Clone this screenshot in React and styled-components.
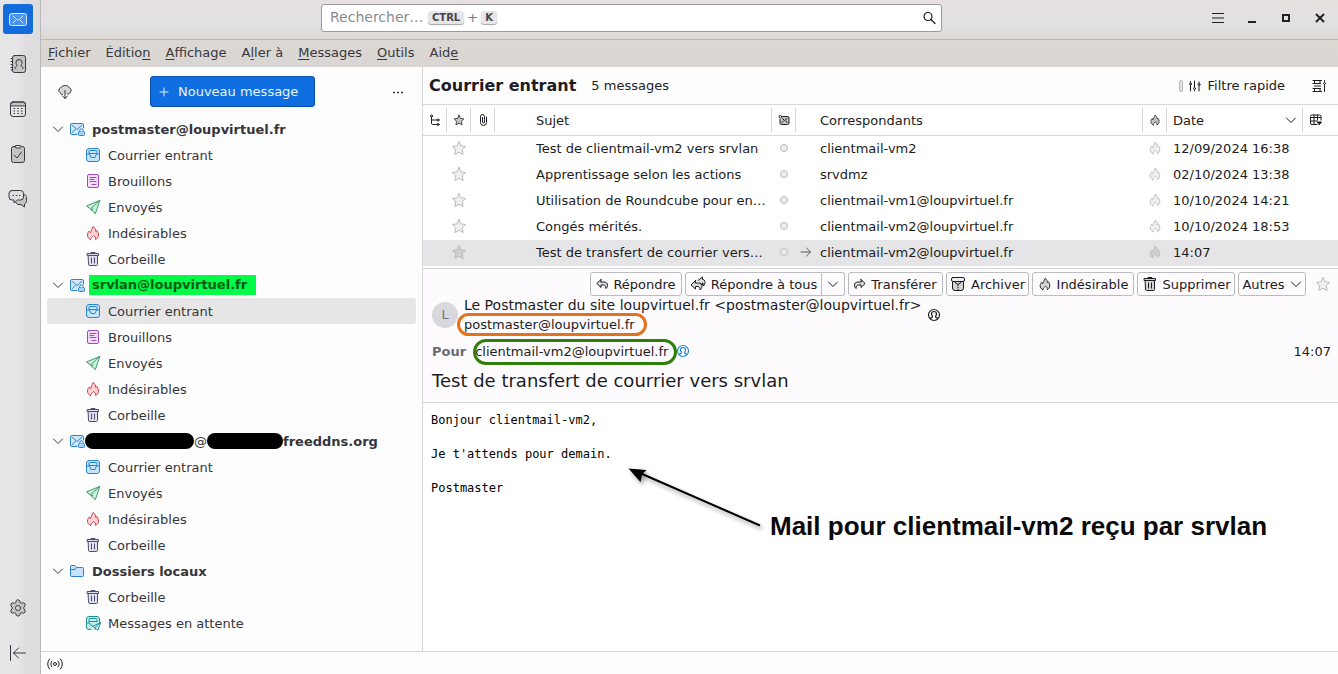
import React from "react";
import styled, { createGlobalStyle, css } from "styled-components";

const Global = createGlobalStyle`
  *, *::before, *::after { box-sizing: border-box; }
  body {
    margin: 0;
    font-family: "DejaVu Sans", "Liberation Sans", sans-serif;
    font-size: 13px;
    line-height: 19px;
    color: #1c1c22;
    background: #fefdfe;
  }
  button, input { font: inherit; color: inherit; margin: 0; }
  button { padding: 0; border: 0; background: none; }
  svg { display: block; flex: none; }
`;

/* ---------- icons ---------- */

const Svg = ({ size = 16, box = 16, children, ...rest }) => (
  <svg
    width={size}
    height={size}
    viewBox={`0 0 ${box} ${box}`}
    fill="none"
    stroke="currentColor"
    strokeWidth="1"
    strokeLinecap="round"
    strokeLinejoin="round"
    aria-hidden="true"
    {...rest}
  >
    {children}
  </svg>
);

const MailSpace = () => (
  <Svg size={18} box={18}>
    <rect x="0.5" y="3.5" width="17" height="12" rx="2" fill="#4a93ee" />
    <path d="M4 6l3.500 3.300c.9.800 2.100.800 3 0L14 6M4 13l3-3M14 13l-3-3" />
  </Svg>
);
const BookSpace = () => (
  <Svg size={18} box={18}>
    <rect x="3.500" y="0.500" width="13" height="17" rx="2" fill="#c4c4c6" />
    <path d="M2 3.500h1.500M2 6.500h1.500M2 9.500h1.500M2 12.500h1.500M2 15h1.500" />
    <path d="M6 13.500c0-2.500 2-2 2-3.200 0-.8-1-1-1-2.800a3 3 0 0 1 6 0c0 1.800-1 2-1 2.800 0 1.200 2 .700 2 3.200" />
  </Svg>
);
const CalendarSpace = () => (
  <Svg size={18} box={18}>
    <path d="M1.500 5.500v-1a2.500 2.500 0 0 1 2.500-2.500h10a2.500 2.500 0 0 1 2.500 2.500v1z" fill="#c4c4c6" />
    <rect x="1.500" y="2" width="15" height="14.500" rx="2.500" />
    <path d="M5 8.500h.6M8.700 8.500h.6M12.400 8.500h.6M5 11h.6M8.700 11h.6M12.400 11h.6M5 13.500h.6M8.700 13.500h.6M12.400 13.500h.6" strokeWidth="1.200" />
  </Svg>
);
const TaskSpace = () => (
  <Svg size={18} box={18}>
    <rect x="2.500" y="1.500" width="13" height="16" rx="2" fill="#c4c4c6" />
    <path d="M6 1.500c0-1 .5-1 1-1h4c.5 0 1 0 1 1s-.5 1.500-1 1.500H7c-.5 0-1-.5-1-1.500z" fill="#dcdcde" />
    <path d="M5.500 10.500l2.500 2.500 4.500-6" />
  </Svg>
);
const ChatSpace = () => (
  <Svg size={20} box={20}>
    <path d="M16.500 5.500c1.500.5 2 1.500 2 3v3c0 2-.8 3-2 3.500v3L13 15.500H11c-1.500 0-2.500-.7-3-2" fill="#c4c4c6" />
    <path d="M4 1.500h8.500a3 3 0 0 1 3 3v3.500a3 3 0 0 1-3 3H9.500L6 14v-3H4a3 3 0 0 1-3-3V4.500a3 3 0 0 1 3-3z" fill="#dcdcde" />
    <path d="M5 6.500h.6M8.200 6.500h.6M11.400 6.500h.6" />
  </Svg>
);
const Gear = () => (
  <Svg size={18} box={18}>
    <path d="M9 .8l1.800 1 .4 1.700 1.400.8 1.700-.6 1.800 1.100v2l-1.200 1.300v1.800l1.200 1.300v2l-1.800 1.100-1.700-.6-1.400.8-.4 1.700-1.800 1-1.800-1-.4-1.700-1.400-.8-1.700.6-1.800-1.100v-2L3.100 9.900V8.100L1.900 6.800v-2l1.800-1.100 1.700.6 1.400-.8.4-1.700z" fill="#c4c4c6" />
    <circle cx="9" cy="9" r="2.500" fill="#dcdcde" />
  </Svg>
);
const Collapse = () => (
  <Svg size={18} box={18}><path d="M1.500 1.500v15M16.500 9H4.500M9.500 4L4.500 9l5 5" /></Svg>
);
const Cloud = () => (
  <Svg>
    <path d="M5.500 10.500H4.500L3 8.500A2.500 2.500 0 0 1 3.500 4C4.500 2 6.500 1.500 8.500 1.500s3 .8 3.700 2.200a2.700 2.700 0 0 1 1.300 4.300c-.5 1.500-1.500 2-3 2" fill="#d8d8da" />
    <path d="M8 6.500v8M5.500 12L8 14.500l2.500-2.500" />
  </Svg>
);
const Plus = () => <Svg size={12} box={12}><path d="M6 2v8M2 6h8" /></Svg>;
const Dots = () => (
  <Svg size={12} box={12}><path d="M1 6.500h2M5 6.500h2M9 6.500h2" strokeWidth="1.600" strokeLinecap="butt" /></Svg>
);
const Chevron = () => <Svg size={12} box={12}><path d="M1.500 4L6 8.500 10.500 4" /></Svg>;
const Account = () => (
  <Svg>
    <path d="M8 13.500H3A1.500 1.500 0 0 1 1.500 12V4A1.500 1.500 0 0 1 3 2.500h10A1.500 1.500 0 0 1 14.500 4v3" fill="#cfe8fb" />
    <path d="M3.500 4.500L8 8.500l4.500-4M3.500 11.500l2.500-3" />
    <rect x="9.500" y="10.500" width="6" height="4" rx="1" fill="#a9d4f8" />
    <path d="M10.800 10.500V9.500a1.700 1.700 0 0 1 3.400 0v1" fill="#e8f5fe" />
  </Svg>
);
const Inbox = () => (
  <Svg>
    <rect x="1.500" y="1.500" width="13" height="13" rx="2.500" fill="#c6e6fb" />
    <path d="M4 6.500V4.500a1 1 0 0 1 1-1h6a1 1 0 0 1 1 1v2M2 7h2.500L6 10.500h4L11.500 7H14M4.500 6.500h7" />
  </Svg>
);
const Drafts = () => (
  <Svg>
    <rect x="2.500" y="1.500" width="11" height="13" rx="1.500" fill="#f2dbfb" />
    <path d="M5 4.500h6M5 6.500h4M5 8.500h6M7 11.500h4" />
  </Svg>
);
const Sent = () => (
  <Svg>
    <path d="M14.500 1.500L1.500 7l3.500 2.500 5 5z" fill="#c9f3d8" />
    <path d="M14.500 1.500L6 9.500v1.500l2-1" />
  </Svg>
);
const flame =
  "M5.500 14.500C3.500 13.500 2.500 12 2.500 10c0-2 1-3 1.500-4 .8 0 1.200.8 1.200 1.800C6.500 6.500 6.800 3.500 8 1.500c2 1 2.700 3 2.700 5l1.300-1c1 1.500 1.500 3 1.500 4.500 0 2-1 3.500-3 4.500.5-2-.5-3.200-2-4-.2 1.200-1.800 1.200-2.200 2.200-.3.700-.8.800-.8 1.800z";
const Flame = ({ size = 16, fill = "#fbd3d6" }) => <Svg size={size}><path d={flame} fill={fill} /></Svg>;
const Trash = ({ fill = "#dfdfef" }) => (
  <Svg>
    <path d="M3.500 4.500h9v9a1 1 0 0 1-1 1h-7a1 1 0 0 1-1-1z" fill={fill} />
    <path d="M2.500 2.500h11v2h-11zM6 2.500V1.500h4v1" fill={fill} />
    <path d="M6.500 7v5M9.500 7v5" />
  </Svg>
);
const Folder = () => (
  <Svg>
    <path d="M1.500 12.500v-9a1 1 0 0 1 1-1h3.500l1.500 2h6a1 1 0 0 1 1 1v7a1 1 0 0 1-1 1h-11a1 1 0 0 1-1-1z" fill="#c6e3fb" />
    <path d="M1.500 6.500H6l1.500-2" />
  </Svg>
);
const Outbox = () => (
  <Svg>
    <path d="M6 14.500H4A2.500 2.500 0 0 1 1.500 12V4A2.500 2.500 0 0 1 4 1.500h8A2.500 2.500 0 0 1 14.500 4v3" fill="#c3f0ee" />
    <path d="M4 7V4.500a1 1 0 0 1 1-1h6a1 1 0 0 1 1 1V7M4.500 6.500h7M2 8h2.500L6 10.500h1" />
    <path d="M15.500 7.500l-8 4 2 1 3 2.500z" fill="#d6f6f1" />
    <path d="M15.500 7.500L10 12.500v2" />
  </Svg>
);
const Broadcast = () => (
  <Svg>
    <circle cx="8" cy="8" r="1.500" />
    <path d="M5 5a4.200 4.200 0 0 0 0 6M11 5a4.200 4.200 0 0 1 0 6M2.500 3a7.500 7.500 0 0 0 0 10M13.500 3a7.500 7.500 0 0 1 0 10" />
  </Svg>
);
const Search = () => (
  <Svg strokeWidth="1.200"><circle cx="7" cy="6.500" r="4" /><path d="M10 9.500l4 4" /></Svg>
);
const Burger = () => <Svg strokeLinecap="butt"><path d="M2 3.500h12M2 8h12M2 12.500h12" /></Svg>;
const Minimize = () => <Svg strokeLinecap="butt" strokeWidth="2"><path d="M4 12h8" /></Svg>;
const Maximize = () => <Svg strokeWidth="2" strokeLinejoin="miter"><rect x="5" y="5" width="6" height="6" /></Svg>;
const Close = () => <Svg strokeWidth="2" strokeLinecap="butt"><path d="M4 4l8 8M12 4l-8 8" /></Svg>;
const Sliders = () => (
  <Svg size={12} box={12}>
    <path d="M1.500 5v6M1.500 1.500v1M5.500 1v6M5.500 10.500v.5M10 6v5M10 2v1.500" />
    <circle cx="1.500" cy="4" r="1" /><circle cx="5.500" cy="8.500" r="1" /><circle cx="10" cy="4.500" r="1" />
  </Svg>
);
const Display = () => (
  <Svg size={14} box={14}>
    <path d="M1 1.500h8.500M1 4.500h7.500M1 9.500h7.500M1 12.500h8.500M2.500 1.500v3M2.500 9.500v3M8 1.500v3M8 9.500v3M2.500 7h6M12.500 6.500v6M12.500 1.500v1" />
    <circle cx="12.500" cy="4.500" r="1" />
  </Svg>
);
const Thread = () => (
  <Svg size={12} box={12}>
    <circle cx="2.500" cy="2" r="1" /><circle cx="9" cy="6" r="1" /><circle cx="9" cy="10.500" r="1" />
    <path d="M2.500 3v6c0 1 .5 1.500 1.500 1.500h4M2.500 6H8" />
  </Svg>
);
const Star = ({ size = 16, fill = "#efeff0" }) => (
  <Svg size={size}>
    <path d="M8 1.500l2 4.300 4.500.7-3.200 3.300.8 4.700L8 12.300l-4.100 2.200.8-4.700L1.500 6.500 6 5.800z" fill={fill} />
  </Svg>
);
const Clip = () => (
  <Svg size={12} box={12}>
    <path d="M9.500 3v5.500a3 3 0 0 1-6 0v-6a2 2 0 0 1 4 0V8a1 1 0 0 1-2 0V3.500" />
  </Svg>
);
const ReadMark = () => (
  <Svg size={12} box={12}>
    <path d="M4.500 2.500h5A1.500 1.500 0 0 1 11 4v5a1.500 1.500 0 0 1-1.500 1.500h-6A1.500 1.500 0 0 1 2 9V5.500" fill="#c4c4c6" />
    <circle cx="2.300" cy="2.700" r="1.300" /><path d="M4.500 4.500L6.500 6.500 9 4.500M4 8.500L5.500 7M9 8.500L8 7" />
  </Svg>
);
const Picker = () => (
  <Svg size={12} box={12}>
    <path d="M7 10.500H2A1.500 1.500 0 0 1 .5 9V2.500A1.500 1.500 0 0 1 2 1h7.500A1.500 1.500 0 0 1 11 2.500V6M.5 3.500H11M4 1v9.500M7.500 1v5M.5 7H7" />
    <path d="M7.500 8h4L9.500 10.500z" fill="currentColor" />
  </Svg>
);
const Forwarded = () => <Svg size={12} box={12} color="#5b5b62"><path d="M1 6h9.500M6.500 2l4 4-4 4" /></Svg>;
const Reply = () => (
  <Svg size={12} box={12}>
    <path d="M5 1.500L.8 5.500 5 9.500V7h2.500c1.500 0 2.500 1 2.500 3.500 1-1 1.500-2 1.500-3C11.500 5 10 4 8 4H5z" fill="#dcdcde" />
  </Svg>
);
const Forward = () => (
  <Svg size={12} box={12}>
    <path d="M7 1.500l4.200 4L7 9.500V7H4.500C3 7 2 8 2 10.500c-1-1-1.500-2-1.500-3C.5 5 2 4 4 4h3z" fill="#dcdcde" />
  </Svg>
);
const ReplyAll = () => (
  <Svg>
    <path d="M8 4.500l4.500-3.500v2.500c1.500-.2 2.500 1 2.500 3 0 1.500-.5 2.500-1.500 3.500 0-2-.3-2.800-1-3v2L10 7" fill="#dcdcde" />
    <path d="M5.500 4.500L1 9l4.500 4v-2.500H8c1.500 0 2 1 2 3.500 1.300-1.200 2-2.500 2-3.500 0-2-1.500-3.500-3.500-3.500h-3z" fill="#dcdcde" />
  </Svg>
);
const Archive = () => (
  <Svg>
    <path d="M2.500 5.500v6.500A2.500 2.500 0 0 0 5 14.500h6a2.500 2.500 0 0 0 2.500-2.500V5.500" fill="#d4d4d6" />
    <rect x="1.500" y="1.500" width="13" height="4" rx="1.500" fill="#f0f0f2" />
    <path d="M5 5.500v1l3 2 3-2v-1M8 8.500v1M8 11v1M8 13.500v.5" />
  </Svg>
);
const Person = () => (
  <Svg size={14} box={14} strokeWidth="1.200">
    <circle cx="7" cy="7" r="5.500" />
    <path d="M3.500 10.500c.3-1 2-.8 2-1.800 0-.7-1-1-1-2.700a2.500 2.500 0 0 1 5 0c0 1.700-1 2-1 2.700 0 1 1.700.8 2 1.800" />
  </Svg>
);

/* ---------- shell ---------- */

const Shell = styled.div`
  display: flex;
  min-height: 100vh;
`;
const Rail = styled.nav`
  display: flex;
  flex-direction: column;
  align-items: center;
  flex: none;
  width: 41px;
  padding: 4px 5px 12px 0;
  color: #38383d;
  border-right: 1px solid #b9b9bc;
  background: linear-gradient(90deg, #e4e5e4, #e8e6e8 40%, #dfdddf 65%, #dcdcdd);
`;
const SpaceButton = styled.button`
  display: grid;
  place-items: center;
  width: 30px;
  height: 30px;
  margin-bottom: 15px;
  border-radius: 3px;
  ${(p) => p.$active && css`color: #d5ecff; background: #146bdc;`}
  &:last-child { margin-bottom: -6px; }
`;
const Grow = styled.div`flex: 1;`;
const Main = styled.div`
  display: flex;
  flex-direction: column;
  flex: 1;
  min-width: 0;
`;

const TitleBar = styled.header`
  display: grid;
  grid-template-columns: 280px minmax(240px, 621px) 1fr;
  align-items: center;
  height: 40px;
  padding-bottom: 4px;
  border-bottom: 1px solid #b9b8b3;
  background: linear-gradient(#e6dfdf, #e1e1e3 60%, #dcd9d3);
`;
const SearchBox = styled.form`
  position: relative;
  grid-column: 2;
  display: flex;
  height: 28px;
  border: 1px solid #9b9a9c;
  border-radius: 3px;
  background: #fff;
`;
const SearchInput = styled.input`
  flex: 1;
  min-width: 0;
  padding: 0 8px;
  border: 0;
  outline: 0;
  font-size: 14px;
  background: transparent;
  &::placeholder { color: #8b8b8f; opacity: 1; }
`;
const SearchHint = styled.span`
  position: absolute;
  top: 3px;
  left: 106px;
  display: flex;
  gap: 3px;
  align-items: center;
  color: #77777b;
  pointer-events: none;
`;
const Key = styled.kbd`
  padding: 0 4px;
  font: bold 10px/13px "DejaVu Sans", sans-serif;
  color: #45454a;
  border-radius: 3px;
  background: #e6e6e8;
  box-shadow: 0 1px 1px #a5a5a8;
`;
const SearchGo = styled.button`
  display: grid;
  place-items: center;
  width: 24px;
`;
const WindowControls = styled.div`
  display: flex;
  justify-content: flex-end;
  gap: 18px;
  padding-right: 10px;
  color: #222226;
`;

const MenuBar = styled.nav`
  display: flex;
  gap: 15px;
  align-items: center;
  height: 27px;
  padding-left: 7px;
  color: #38383d;
  background: linear-gradient(#dcd9d3, #d9d5d3);
`;
const MenuButton = styled.button`
  height: 26px;
  margin-bottom: 1px;
  line-height: 18px;
  white-space: pre;
  text-underline-offset: 2px;
`;

const Panes = styled.div`
  display: flex;
  flex: 1;
`;
const StatusBar = styled.footer`
  display: flex;
  align-items: center;
  height: 23px;
  padding: 2px 0 0 6px;
  border-top: 1px solid #d6d6d9;
`;

/* ---------- folders ---------- */

const Sidebar = styled.aside`
  flex: none;
  width: 382px;
  border-right: 1px solid #d6d6d9;
  background: #fefdfe;
  color: #35353a;
`;
const SidebarTop = styled.div`
  display: flex;
  align-items: center;
  justify-content: space-between;
  height: 49px;
  padding: 0 18px 0 16px;
`;
const Compose = styled.button`
  display: flex;
  gap: 8px;
  align-items: center;
  width: 165px;
  height: 31px;
  padding-left: 7px;
  color: #e9f5ff;
  border: 1px solid #0b4fb0;
  border-radius: 3px;
  background: #0f6fe0;
`;
const FolderList = styled.ul`
  margin: 0;
  padding: 0 6px;
  list-style: none;
`;
const Row = styled.li`
  display: flex;
  align-items: center;
  height: 26px;
  border-radius: 3px;
`;
const AccountRow = styled(Row)`
  gap: 5px;
  padding-left: 5px;
  font-weight: bold;
`;
const FolderRow = styled(Row)`
  gap: 7px;
  padding-left: 38px;
  background: ${(p) => (p.$selected ? "#e6e6e7" : "transparent")};
`;
const Tint = styled.span`color: ${(p) => p.$color};`;
const AccountName = styled.span`
  display: flex;
  align-items: center;
  padding: 0 2px;
  ${(p) => p.$marked && css`
    margin-left: -1px;
    padding: 0 9px 1px 3px;
    color: #075a17;
    background: #02fb46;
  `}
`;
const Redacted = styled.span`
  width: ${(p) => p.$width}px;
  height: 16px;
  border-radius: 8px;
  background: #000;
`;
const HiddenName = styled.span`
  display: flex;
  align-items: center;
  margin-left: -5px;
`;
const At = styled.span`font-weight: normal;`;

/* ---------- message list ---------- */

const Content = styled.main`
  display: flex;
  flex-direction: column;
  flex: 1;
  min-width: 0;
`;
const ListHeader = styled.div`
  display: flex;
  align-items: center;
  height: 38px;
  padding: 0 12px 0 6px;
  border-bottom: 1px solid #d6d6d9;
  background: #fefdfe;
`;
const ListTitle = styled.h1`
  margin: 0 15px 0 0;
  font-size: 16px;
  line-height: 20px;
`;
const QuickFilter = styled.button`
  display: flex;
  gap: 7px;
  align-items: center;
  margin: 0 27px 0 auto;
`;
const FilterMark = styled.span`
  width: 4px;
  height: 12px;
  margin-right: -1px;
  border: 1px solid #b9b9bc;
  border-radius: 2px;
  background: #e4e4e6;
`;
const MessageTable = styled.table`
  width: 100%;
  table-layout: fixed;
  border-collapse: separate;
  border-spacing: 0;
  background: #fff;
  border-bottom: 2px solid #fff;
`;
const Head = styled.th`
  height: 31px;
  padding: 0;
  font-weight: normal;
  text-align: left;
  border-bottom: 1px solid #d6d6d9;
  width: ${(p) => (p.$width ? `${p.$width}px` : "auto")};
`;
const HeadCell = styled.div`
  display: flex;
  align-items: center;
  justify-content: ${(p) => (p.$center ? "center" : "space-between")};
  height: 24px;
  padding: 0 ${(p) => (p.$center ? 0 : 5)}px 0 ${(p) => p.$indent || 0}px;
  border-right: ${(p) => (p.$last ? 0 : 1)}px solid #d6d6d9;
`;
const MessageRow = styled.tr`background: ${(p) => (p.$selected ? "#e5e5e7" : "transparent")};`;
const Cell = styled.td`
  height: 26px;
  padding: 0 0 2px ${(p) => p.$indent || 0}px;
  overflow: hidden;
  white-space: nowrap;
`;
const CellIcon = styled.span`
  display: flex;
  justify-content: center;
  color: #bcbcc0;
`;
const Dot = styled.span`
  width: 8px;
  height: 8px;
  border: 1px solid #bcbcc0;
  border-radius: 4px;
  background: #ececee;
`;
const Correspondent = styled.span`
  display: grid;
  grid-template-columns: 12px 1fr;
  gap: 8px;
  align-items: center;
`;

/* ---------- message ---------- */

const MessageHeader = styled.section`
  padding: 3px 7px 9px 9px;
  border-top: 1px solid #d6d6d9;
  border-bottom: 1px solid #d6d6d9;
  background: #fdfbfe;
`;
const Toolbar = styled.div`
  display: flex;
  gap: 3px;
  justify-content: flex-end;
  align-items: center;
`;
const Action = styled.button`
  display: flex;
  gap: 5px;
  align-items: center;
  justify-content: center;
  min-width: ${(p) => p.$width}px;
  height: 24px;
  border: 1px solid #bbbbc0;
  border-radius: ${(p) => (p.$side === "left" ? "3px 0 0 3px" : p.$side === "right" ? "0 3px 3px 0" : "3px")};
  border-left-width: ${(p) => (p.$side === "right" ? 0 : 1)}px;
`;
const Split = styled.div`display: flex;`;
const StarButton = styled.button`
  margin-left: 6px;
  color: #bcbcc0;
`;
const Sender = styled.div`
  display: flex;
  align-items: center;
`;
const Avatar = styled.span`
  flex: none;
  width: 26px;
  margin-right: 6px;
  line-height: 26px;
  text-align: center;
  color: #76767b;
  border-radius: 13px;
  background: #d9d8dc;
`;
const SenderLines = styled.div`
  display: flex;
  flex-direction: column;
  align-items: flex-start;
  line-height: 19px;
  margin-right: 6px;
`;
const Ring = styled.span`
  position: relative;
  &::after {
    content: "";
    position: absolute;
    inset: ${(p) => p.$inset};
    border: 3px solid ${(p) => p.$color};
    border-radius: 13px;
    pointer-events: none;
  }
`;
const Recipients = styled.div`
  display: flex;
  align-items: center;
  height: 34px;
`;
const Label = styled.span`
  margin-right: 9px;
  font-weight: bold;
  color: #6c6c72;
`;
const SenderName = styled.span`font-size: 14px;`;
const Contact = styled.span`
  margin-left: 8px;
  color: #1f86d8;
`;
const Time = styled.time`margin-left: auto;`;
const Subject = styled.h2`
  margin: 0;
  font-size: 18px;
  font-weight: normal;
  line-height: 25px;
`;
const Body = styled.article`
  position: relative;
  flex: 1;
  min-height: 180px;
  padding: 9px 8px;
  background: #fff;
`;
const Plain = styled.pre`
  margin: 0;
  font: 12px/17px "DejaVu Sans Mono", monospace;
  color: #000;
`;
const Note = styled.div`
  position: absolute;
  top: 61px;
  left: 200px;
  display: flex;
  align-items: flex-start;
  color: #0a0a0a;
`;
const NoteText = styled.strong`
  margin: 46px 0 0 -3px;
  font: bold 26px/32px "Liberation Sans", Arial, sans-serif;
  white-space: nowrap;
`;

/* ---------- data ---------- */

const kinds = {
  inbox: ["Courrier entrant", Inbox, "#2b83cf"],
  drafts: ["Brouillons", Drafts, "#9a4bc0"],
  sent: ["Envoyés", Sent, "#3a9b6c"],
  junk: ["Indésirables", Flame, "#cf4452"],
  trash: ["Corbeille", Trash, "#4e4c6c"],
  outbox: ["Messages en attente", Outbox, "#1f8f94"],
};
const accounts = [
  { id: "a", name: "postmaster@loupvirtuel.fr", folders: ["inbox", "drafts", "sent", "junk", "trash"] },
  { id: "b", name: "srvlan@loupvirtuel.fr", marked: true, selected: "inbox", folders: ["inbox", "drafts", "sent", "junk", "trash"] },
  { id: "c", hidden: true, name: "freeddns.org", folders: ["inbox", "sent", "junk", "trash"] },
  { id: "d", local: true, name: "Dossiers locaux", folders: ["trash", "outbox"] },
];
const messages = [
  ["Test de clientmail-vm2 vers srvlan", "clientmail-vm2", "12/09/2024 16:38"],
  ["Apprentissage selon les actions", "srvdmz", "02/10/2024 13:38"],
  ["Utilisation de Roundcube pour en…", "clientmail-vm1@loupvirtuel.fr", "10/10/2024 14:21"],
  ["Congés mérités.", "clientmail-vm2@loupvirtuel.fr", "10/10/2024 18:53"],
  ["Test de transfert de courrier vers…", "clientmail-vm2@loupvirtuel.fr", "14:07"],
];
const menus = [
  ["", "F", "ichier"],
  ["Éditio", "n", ""],
  ["", "A", "ffichage"],
  ["A", "l", "ler à"],
  ["", "M", "essages"],
  ["", "O", "utils"],
  ["Aid", "e", ""],
];

const AccountGroup = ({ account }) => (
  <>
    <AccountRow>
      <Chevron />
      <Tint $color="#2b83cf">{account.local ? <Folder /> : <Account />}</Tint>
      {account.hidden ? (
        <HiddenName>
          <Redacted $width={109} />
          <At>@</At>
          <Redacted $width={76} />
          {account.name}
        </HiddenName>
      ) : (
        <AccountName $marked={account.marked}>{account.name}</AccountName>
      )}
    </AccountRow>
    {account.folders.map((key) => {
      const [label, Icon, color] = kinds[key];
      return (
        <FolderRow key={key} $selected={account.selected === key}>
          <Tint $color={color}><Icon /></Tint>
          {label}
        </FolderRow>
      );
    })}
  </>
);

export default function App() {
  return (
    <>
      <Global />
      <Shell>
        <Rail>
          <SpaceButton $active aria-label="Courrier"><MailSpace /></SpaceButton>
          <SpaceButton aria-label="Carnet d'adresses"><BookSpace /></SpaceButton>
          <SpaceButton aria-label="Agenda"><CalendarSpace /></SpaceButton>
          <SpaceButton aria-label="Tâches"><TaskSpace /></SpaceButton>
          <SpaceButton aria-label="Discussion"><ChatSpace /></SpaceButton>
          <Grow />
          <SpaceButton aria-label="Paramètres"><Gear /></SpaceButton>
          <SpaceButton aria-label="Replier"><Collapse /></SpaceButton>
        </Rail>
        <Main>
          <TitleBar>
            <SearchBox role="search">
              <SearchInput type="text" placeholder="Rechercher…" aria-label="Rechercher" />
              <SearchHint><Key>CTRL</Key>+<Key>K</Key></SearchHint>
              <SearchGo type="button" aria-label="Lancer la recherche"><Search /></SearchGo>
            </SearchBox>
            <WindowControls>
              <button aria-label="Menu"><Burger /></button>
              <button aria-label="Réduire"><Minimize /></button>
              <button aria-label="Agrandir"><Maximize /></button>
              <button aria-label="Fermer"><Close /></button>
            </WindowControls>
          </TitleBar>
          <MenuBar>
            {menus.map(([before, key, after]) => (
              <MenuButton key={before + key + after}>{before}<u>{key}</u>{after}</MenuButton>
            ))}
          </MenuBar>
          <Panes>
            <Sidebar>
              <SidebarTop>
                <button aria-label="Relever"><Cloud /></button>
                <Compose><Plus />Nouveau message</Compose>
                <button aria-label="Options"><Dots /></button>
              </SidebarTop>
              <FolderList>
                {accounts.map((account) => <AccountGroup key={account.id} account={account} />)}
              </FolderList>
            </Sidebar>
            <Content>
              <ListHeader>
                <ListTitle>Courrier entrant</ListTitle>
                <span>5 messages</span>
                <QuickFilter><FilterMark /><Sliders />Filtre rapide</QuickFilter>
                <button aria-label="Affichage"><Display /></button>
              </ListHeader>
              <MessageTable>
                <thead>
                  <tr>
                    <Head $width={24}><HeadCell $center><Thread /></HeadCell></Head>
                    <Head $width={24}><HeadCell $center><Star size={12} fill="#c4c4c6" /></HeadCell></Head>
                    <Head $width={24}><HeadCell $center><Clip /></HeadCell></Head>
                    <Head $width={277}><HeadCell $indent={41}>Sujet</HeadCell></Head>
                    <Head $width={24}><HeadCell $center><ReadMark /></HeadCell></Head>
                    <Head><HeadCell $indent={24}>Correspondants</HeadCell></Head>
                    <Head $width={24}><HeadCell $center><Flame size={12} fill="#c4c4c6" /></HeadCell></Head>
                    <Head $width={136}><HeadCell $indent={6}>Date<Chevron /></HeadCell></Head>
                    <Head $width={35}><HeadCell $last $indent={7}><Picker /></HeadCell></Head>
                  </tr>
                </thead>
                <tbody>
                  {messages.map(([subject, who, date], i) => {
                    const selected = i === 4;
                    const fill = selected ? "#cfcfd2" : "#efeff0";
                    return (
                      <MessageRow key={subject} $selected={selected}>
                        <Cell />
                        <Cell><CellIcon><Star fill={fill} /></CellIcon></Cell>
                        <Cell />
                        <Cell $indent={41}>{subject}</Cell>
                        <Cell><CellIcon><Dot /></CellIcon></Cell>
                        <Cell $indent={4}>
                          <Correspondent>
                            <span>{selected && <Forwarded />}</span>
                            {who}
                          </Correspondent>
                        </Cell>
                        <Cell><CellIcon><Flame size={14} fill={fill} /></CellIcon></Cell>
                        <Cell $indent={6}>{date}</Cell>
                        <Cell />
                      </MessageRow>
                    );
                  })}
                </tbody>
              </MessageTable>
              <MessageHeader>
                <Toolbar>
                  <Action $width={92}><Reply />Répondre</Action>
                  <Split>
                    <Action $width={137} $side="left"><ReplyAll />Répondre à tous</Action>
                    <Action $width={23} $side="right" aria-label="Autres réponses"><Chevron /></Action>
                  </Split>
                  <Action $width={95}><Forward />Transférer</Action>
                  <Action $width={83}><Archive />Archiver</Action>
                  <Action $width={102}><Flame size={14} fill="#d4d4d6" />Indésirable</Action>
                  <Action $width={98}><Trash fill="#d4d4d6" />Supprimer</Action>
                  <Action $width={68}>Autres<Chevron /></Action>
                  <StarButton aria-label="Suivre"><Star /></StarButton>
                </Toolbar>
                <Sender>
                  <Avatar>L</Avatar>
                  <SenderLines>
                    <SenderName>Le Postmaster du site loupvirtuel.fr &lt;postmaster@loupvirtuel.fr&gt;</SenderName>
                    <Ring $color="#e4711c" $inset="-2px -12px -2px -7px">postmaster@loupvirtuel.fr</Ring>
                  </SenderLines>
                  <Person />
                </Sender>
                <Recipients>
                  <Label>Pour</Label>
                  <Ring $color="#2f7f0b" $inset="-3px -9px -4px -2px">clientmail-vm2@loupvirtuel.fr</Ring>
                  <Contact><Person /></Contact>
                  <Time>14:07</Time>
                </Recipients>
                <Subject>Test de transfert de courrier vers srvlan</Subject>
              </MessageHeader>
              <Body>
                <Plain>{"Bonjour clientmail-vm2,\n\nJe t'attends pour demain.\n\nPostmaster"}</Plain>
                <Note>
                  <svg width="150" height="80" viewBox="0 0 150 80" aria-hidden="true">
                    <defs>
                      <filter id="soft" x="-20%" y="-20%" width="140%" height="140%">
                        <feDropShadow dx="2" dy="3" stdDeviation="2" floodOpacity="0.4" />
                      </filter>
                    </defs>
                    <g filter="url(#soft)">
                      <path d="M18 9.500L137 61.500" stroke="#000" strokeWidth="2" />
                      <path d="M5.500 4.500L23.500 6 19 10.500 17.500 18z" fill="#000" />
                    </g>
                  </svg>
                  <NoteText>Mail pour clientmail-vm2 reçu par srvlan</NoteText>
                </Note>
              </Body>
            </Content>
          </Panes>
          <StatusBar><Broadcast /></StatusBar>
        </Main>
      </Shell>
    </>
  );
}
